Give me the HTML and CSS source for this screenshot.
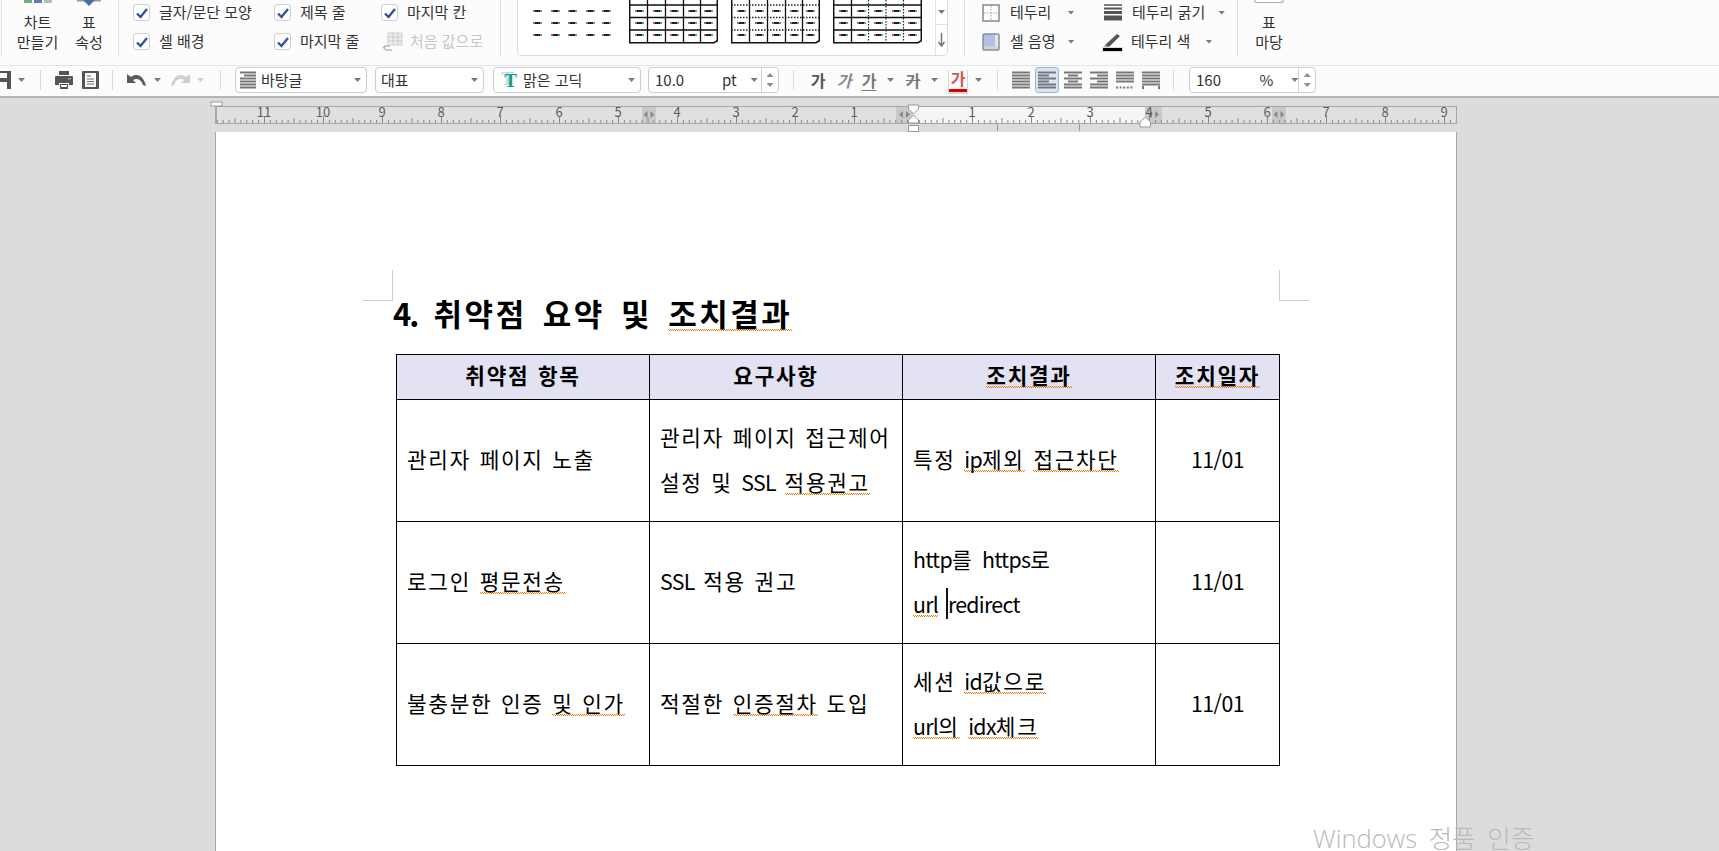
FILE: index.html
```html
<!DOCTYPE html>
<html lang="ko">
<head>
<meta charset="utf-8">
<title>표 편집</title>
<link rel="stylesheet" href="styles.css">
</head>
<body>
<svg class="defs" aria-hidden="true">
  <defs>
    <symbol id="dash" viewBox="0 0 9 2"><rect width="2" height="2" fill="#b9664e"/><rect x="2" width="5" height="2" fill="#222"/><rect x="7" width="2" height="2" fill="#5f97c8"/></symbol>
    <g id="dashrow"><use href="#dash" x="0" width="9" height="2"/><use href="#dash" x="18" width="9" height="2"/><use href="#dash" x="35" width="9" height="2"/><use href="#dash" x="53" width="9" height="2"/><use href="#dash" x="69" width="9" height="2"/></g>
    <g id="dashes"><use href="#dashrow" y="0"/><use href="#dashrow" y="12"/><use href="#dashrow" y="24"/></g>
    <symbol id="al-both" viewBox="0 0 18 18"><path d="M0 1.500h18M0 4.500h18M0 7.500h18M0 10.500h18M0 13.500h18M0 16.500h18" stroke="#777" stroke-width="2"/></symbol>
    <symbol id="al-left" viewBox="0 0 18 18"><path d="M0 1.500h18M0 4.500h11M0 7.500h18M0 10.500h11M0 13.500h18M0 16.500h18" stroke="#777" stroke-width="2"/></symbol>
    <symbol id="al-center" viewBox="0 0 18 18"><path d="M0 1.500h18M4 4.500h10M0 7.500h18M4 10.500h10M0 13.500h18M0 16.500h18" stroke="#777" stroke-width="2"/></symbol>
    <symbol id="al-right" viewBox="0 0 18 18"><path d="M0 1.500h18M7 4.500h11M0 7.500h18M7 10.500h11M0 13.500h18M0 16.500h18" stroke="#777" stroke-width="2"/></symbol>
    <symbol id="al-dist" viewBox="0 0 18 18"><path d="M0 1.500h18M0 4.500h18M0 7.500h18M0 10.500h18" stroke="#777" stroke-width="2"/><path d="M0 16.500h18" stroke="#777" stroke-width="2" stroke-dasharray="2 1.600"/></symbol>
    <symbol id="al-div" viewBox="0 0 18 18"><path d="M0 1.500h18M0 4.500h18M0 7.500h18M0 10.500h18M0 13.500h18" stroke="#777" stroke-width="2"/><path d="M1 15v3M17 15v3" stroke="#777" stroke-width="2"/></symbol>
    <symbol id="check" viewBox="0 0 12 12"><path d="M1 6.500 4.500 10 11 2" fill="none" stroke="#33549f" stroke-width="2.400"/></symbol>
    <pattern id="ticks" width="59" height="18" patternUnits="userSpaceOnUse" patternTransform="translate(698 0)">
      <path d="M.5 10v7M30 12v5M6.400 14v3M12.300 14v3M18.200 14v3M24.100 14v3M35.900 14v3M41.800 14v3M47.700 14v3M53.600 14v3" stroke="#888" stroke-width="1"/>
    </pattern>
  </defs>
</svg>

<header class="ribbon">
  <section class="group group-a">
    <div class="big big-chart">
      <svg class="big-icon" viewBox="0 0 28 6"><rect x="0" y="-4" width="8" height="7" fill="#6fae7d"/><rect x="10" y="-4" width="8" height="7" fill="#5e7cc4"/><rect x="20" y="-4" width="8" height="7" fill="#bbb"/></svg>
      <span>차트</span><span>만들기</span>
    </div>
    <div class="big big-prop">
      <svg class="big-icon" viewBox="0 0 28 6"><path d="M2 0h24v1.500h-24z" fill="#9a9a9a"/><path d="M8 0h12l-6 6z" fill="#4d6db0"/></svg>
      <span>표</span><span>속성</span>
    </div>
  </section>

  <section class="group group-b">
    <label class="opt"><span class="box"><svg class="tick"><use href="#check"/></svg></span>글자/문단 모양</label>
    <label class="opt"><span class="box"><svg class="tick"><use href="#check"/></svg></span>제목 줄</label>
    <label class="opt"><span class="box"><svg class="tick"><use href="#check"/></svg></span>마지막 칸</label>
    <label class="opt"><span class="box"><svg class="tick"><use href="#check"/></svg></span>셀 배경</label>
    <label class="opt"><span class="box"><svg class="tick"><use href="#check"/></svg></span>마지막 줄</label>
    <span class="opt opt-off">
      <svg class="reset" viewBox="0 0 21 20"><path d="M6 1h14v12H6zM6 5h14M6 9h14M11 1v12M16 1v12" fill="#eee" stroke="#ccc"/><path d="M8 14H4l-2 2 2 2h6M1 16l3-3" fill="none" stroke="#bbb" stroke-width="1.500"/></svg>
      처음 값으로
    </span>
  </section>

  <section class="group group-c">
    <div class="gallery">
      <svg class="preset-plain" viewBox="0 0 79 40"><use href="#dashes" y="10"/></svg>
      <svg class="preset" viewBox="0 0 89 44"><use href="#dashes" x="6" y="10"/><path d="M0 5h88M0 17.500h88M0 30h88M18.500 0v43M36.500 0v43M54.500 0v43M71.500 0v43" stroke="#111" stroke-width="1.300"/><path d="M.7 0v42.700H85l3.300-2V0" fill="none" stroke="#111" stroke-width="1.500"/></svg>
      <svg class="preset" viewBox="0 0 89 44"><use href="#dashes" x="6" y="10"/><path d="M0 5h88M0 17.500h88M0 30h88" stroke="#222" stroke-width="1.300" stroke-dasharray="1.500 1.500"/><path d="M18.500 0v43M36.500 0v43M54.500 0v43M71.500 0v43" stroke="#111" stroke-width="1.300"/><path d="M.7 0v42.700H85l3.300-2V0" fill="none" stroke="#111" stroke-width="1.500"/></svg>
      <svg class="preset" viewBox="0 0 89 44"><use href="#dashes" x="6" y="10"/><path d="M0 5h88M0 17.500h88M0 30h88M18.500 0v43" stroke="#111" stroke-width="1.300"/><path d="M35.500 0v43M53 0v43M70.500 0v43" stroke="#222" stroke-width="1.200" stroke-dasharray="1.500 1.500"/><path d="M.7 0v42.700H85l3.300-2V0" fill="none" stroke="#111" stroke-width="1.500"/></svg>
      <div class="gallery-scroll">
        <div class="scroll-cell"><span class="caret"></span></div>
        <div class="scroll-cell scroll-more"><svg class="more" viewBox="0 0 9 14"><path d="M4.500 0v12M1.500 9l3 4 3-4" fill="none" stroke="#777" stroke-width="1.500"/></svg></div>
      </div>
    </div>
  </section>

  <section class="group group-d">
    <div class="tool">
      <svg class="tool-icon" viewBox="0 0 18 18"><rect x="1" y="1" width="16" height="16" fill="#fff" stroke="#888" stroke-width="1.500"/><path d="M9 2v14M2 9h14" stroke="#999" stroke-dasharray="1.500 1.500"/></svg>
      <span class="tool-label">테두리</span><span class="caret caret-a"></span>
    </div>
    <div class="tool">
      <svg class="tool-icon" viewBox="0 0 18 18"><path d="M0 1h18" stroke="#555" stroke-width="1.500"/><path d="M0 4.500h18" stroke="#555" stroke-width="2"/><path d="M0 8.500h18" stroke="#555" stroke-width="3"/><path d="M0 14h18" stroke="#555" stroke-width="5"/></svg>
      <span class="tool-label">테두리 굵기</span><span class="caret caret-b"></span>
    </div>
    <div class="tool">
      <svg class="tool-icon" viewBox="0 0 18 18"><rect x="1" y="1" width="16" height="16" rx="1" fill="#b4c0e2"/><path d="M13 1h4v16h-4z" fill="#e4e4ec"/><path d="M1 13.500h16V17H1z" fill="#d2d2d2"/><rect x="1" y="1" width="16" height="16" rx="1" fill="none" stroke="#8a8f9e" stroke-width="1.500"/></svg>
      <span class="tool-label">셀 음영</span><span class="caret caret-c"></span>
    </div>
    <div class="tool">
      <svg class="tool-icon tool-pen" viewBox="0 0 21 20"><path d="M3 13 15 2l3 2L7 15z" fill="#555"/><path d="M3 13l4 2-5 1z" fill="#7b93c8"/><rect x="0" y="15" width="21" height="5" fill="#ddd"/><rect x="1" y="16" width="19" height="3" fill="#000"/></svg>
      <span class="tool-label">테두리 색</span><span class="caret caret-d"></span>
    </div>
  </section>

  <section class="group group-e">
    <div class="big big-gallery">
      <span class="big-frame"></span>
      <span>표</span><span>마당</span>
    </div>
  </section>
</header>

<nav class="toolbar">
  <svg class="ti-save" viewBox="0 0 11 18"><path d="M-9 0H11V18H-9z" fill="#555"/><rect x="-5" y="2" width="12" height="5" fill="#fff"/><rect x="-5" y="11" width="12" height="7" fill="#fff"/></svg>
  <span class="caret m-7"></span>
  <span class="sep m-15"></span>
  <svg class="ti-print m-14" viewBox="0 0 18 18"><path d="M4 0h10v4H4z" fill="#555"/><path d="M1 5h16a1 1 0 0 1 1 1v8h-4v-2H4v2H0V6a1 1 0 0 1 1-1z" fill="#555"/><path d="M5 13h8v5H5z" fill="#555"/><rect x="6" y="14" width="6" height="2" fill="#fff"/><rect x="13" y="7" width="3" height="1.500" fill="#7fa6d8"/></svg>
  <svg class="ti-page m-9" viewBox="0 0 17 18"><rect width="17" height="18" rx="1" fill="#555"/><rect x="3" y="2" width="11" height="14" fill="#fff"/><path d="M5 5h4M5 8h7M5 10.500h7M5 13h7" stroke="#666"/></svg>
  <span class="sep m-13"></span>
  <svg class="ti-undo m-14" viewBox="0 0 19 14"><path d="M0 1v9h9L6 7c4-2 8-1 10 5l3 1C17 4 11-1 4 4z" fill="#5b5b5b"/></svg>
  <span class="caret m-8"></span>
  <svg class="ti-undo ti-redo m-10" viewBox="0 0 19 14"><path d="M0 1v9h9L6 7c4-2 8-1 10 5l3 1C17 4 11-1 4 4z" fill="#cfcfcf"/></svg>
  <span class="caret caret-off m-7"></span>
  <span class="sep m-16"></span>

  <div class="combo combo-style m-14">
    <svg class="ti-style" viewBox="0 0 16 18"><path d="M0 1.500h16M4 4.500h12M0 7.500h16M0 10.500h16M0 13.500h16M0 16.500h16" stroke="#777" stroke-width="2"/></svg>
    <span class="combo-text">바탕글</span><span class="caret combo-caret"></span>
  </div>
  <div class="combo combo-rep m-8">
    <span class="combo-text">대표</span><span class="caret combo-caret"></span>
  </div>
  <div class="combo combo-font m-9">
    <span class="font-t">T</span>
    <span class="combo-text">맑은 고딕</span><span class="caret combo-caret"></span>
  </div>
  <div class="combo combo-size m-7">
    <span class="combo-text combo-value">10.0</span><span class="combo-text combo-unit">pt</span><span class="caret combo-caret"></span>
    <span class="spin"><span class="spin-up"></span><span class="spin-down"></span></span>
  </div>
  <span class="sep m-14"></span>
  <span class="ga ga-b m-15">가</span>
  <span class="ga ga-i m-8">가</span>
  <span class="ga ga-u m-7">가</span>
  <span class="caret m-9"></span>
  <span class="ga ga-s m-10">가</span>
  <span class="caret m-9"></span>
  <span class="ga ga-c m-11">가</span>
  <span class="caret m-8"></span>
  <span class="sep m-15"></span>
  <svg class="ti-al m-14"><use href="#al-both"/></svg>
  <span class="al-on m-5"><svg class="ti-al"><use href="#al-left"/></svg></span>
  <svg class="ti-al m-5"><use href="#al-center"/></svg>
  <svg class="ti-al m-8"><use href="#al-right"/></svg>
  <svg class="ti-al m-8"><use href="#al-dist"/></svg>
  <svg class="ti-al m-8"><use href="#al-div"/></svg>
  <span class="sep m-13"></span>
  <div class="combo combo-zoom m-15">
    <span class="combo-text combo-value">160</span><span class="combo-text combo-unit">%</span><span class="caret combo-caret"></span>
    <span class="spin"><span class="spin-up"></span><span class="spin-down"></span></span>
  </div>
</nav>

<main class="workspace">
  <svg class="ruler" viewBox="0 0 1262 32">
    <g transform="translate(10 6)">
      <rect x="0" y="0" width="1242" height="18" fill="#e0e0e0"/>
      <rect x="698" y="1" width="232" height="16" fill="#f5f5f5"/>
      <rect x="427" y="1" width="14" height="16" fill="#c9c9c9"/>
      <rect x="681" y="1" width="17" height="16" fill="#c9c9c9"/>
      <rect x="930" y="1" width="17" height="16" fill="#c9c9c9"/>
      <rect x="1057" y="1" width="14" height="16" fill="#c9c9c9"/>
      <path d="M432.500 5v7l-4-3.500zM435.500 5v7l4-3.500zM688 5v7l-4-3.500zM691 5v7l4-3.500zM937 5v7l-4-3.500zM940 5v7l4-3.500zM1062.500 5v7l-4-3.500zM1065.500 5v7l4-3.500z" fill="#8a8a8a"/>
      <rect x="0" y="0" width="1242" height="18" fill="url(#ticks)"/>
      <path d="M0 .5h1242M0 17.500h1242M1241.500 0v18" fill="none" stroke="#a8a8a8"/>
      <path d="M1 0v18" stroke="#a8a8a8" stroke-width="2"/>
      <g class="ruler-nums">
        <text x="49" y="11">11</text><text x="108" y="11">10</text><text x="167" y="11">9</text><text x="226" y="11">8</text><text x="285" y="11">7</text><text x="344" y="11">6</text><text x="403" y="11">5</text><text x="462" y="11">4</text><text x="521" y="11">3</text><text x="580" y="11">2</text><text x="639" y="11">1</text>
        <text x="757" y="11">1</text><text x="816" y="11">2</text><text x="875" y="11">3</text><text x="934" y="11">4</text><text x="993" y="11">5</text><text x="1052" y="11">6</text><text x="1111" y="11">7</text><text x="1170" y="11">8</text><text x="1229" y="11">9</text>
      </g>
      <rect x="-4" y="-4" width="11" height="4" fill="#fff" stroke="#999"/>
      <path d="M782.500 18v7M864.500 18v7" stroke="#999"/>
      <path d="M693.500-1h10v4l-5 5-5-5z" fill="#fff" stroke="#999"/>
      <path d="M698.500 9l5 5v3h-10v-3z" fill="#fff" stroke="#999"/>
      <rect x="693.500" y="19.500" width="10" height="6" fill="#fff" stroke="#999"/>
      <path d="M930.500 11l5 5v5h-10.500v-5z" fill="#fff" stroke="#999"/>
    </g>
  </svg>

  <article class="page">
    <span class="crop crop-left"></span>
    <span class="crop crop-right"></span>
    <h1 class="doc-title"><span class="num">4.</span> 취약점 요약 및 <span class="sq">조치결과</span></h1>
    <table class="doc-table">
      <colgroup><col class="c-wide"><col class="c-wide"><col class="c-wide"><col class="c-date"></colgroup>
      <thead>
        <tr>
          <th>취약점 항목</th>
          <th>요구사항</th>
          <th><span class="sq">조치결과</span></th>
          <th><span class="sq">조치일자</span></th>
        </tr>
      </thead>
      <tbody>
        <tr>
          <td>관리자 페이지 노출</td>
          <td>관리자 페이지 접근제어<br>설정 및 <span class="lat">SSL</span> <span class="sq">적용권고</span></td>
          <td>특정 <span class="sq"><span class="lat">ip</span>제외</span> <span class="sq">접근차단</span></td>
          <td class="date">11/01</td>
        </tr>
        <tr>
          <td>로그인 <span class="sq">평문전송</span></td>
          <td><span class="lat">SSL</span> 적용 권고</td>
          <td><span class="lat">http</span>를 <span class="lat">https</span>로<br><span class="sq"><span class="lat">url</span></span> <span class="caret-text lat">redirect</span></td>
          <td class="date">11/01</td>
        </tr>
        <tr>
          <td>불충분한 인증 <span class="sq">및 인가</span></td>
          <td>적절한 <span class="sq">인증절차</span> 도입</td>
          <td>세션 <span class="sq"><span class="lat">id</span>값으로</span><br><span class="sq"><span class="lat">url</span>의</span> <span class="sq"><span class="lat">idx</span>체크</span></td>
          <td class="date">11/01</td>
        </tr>
      </tbody>
    </table>
  </article>
</main>

<div class="watermark">Windows 정품 인증</div>
</body>
</html>
```

FILE: styles.css
```css
* { box-sizing: border-box; }
html, body { margin: 0; height: 851px; overflow: hidden; }
body {
  position: relative;
  width: 1719px;
  background: #dcdcdc;
  color: #333;
  font-family: "Noto Sans CJK KR", "Noto Sans", sans-serif;
  font-size: 15px;
  line-height: 20px;
}
svg { display: block; flex: none; }
.defs { position: absolute; width: 0; height: 0; }

/* ribbon */
.ribbon {
  display: flex;
  height: 66px;
  overflow: hidden;
  background: #fcfcfc;
  border-bottom: 1px solid #e4e4e4;
}
.group { height: 56px; border-right: 1px solid #dedede; flex: none; }
.group-a { width: 118px; margin-left: 1px; display: flex; padding-left: 12px; border-left: 1px solid #dedede; }
.big { display: flex; flex-direction: column; align-items: center; }
.big-chart { width: 47px; }
.big-prop { width: 50px; margin-left: 3px; }
.big-icon { width: 28px; height: 6px; margin-bottom: 6px; }
.big-gallery { width: 62px; }
.big-frame { width: 30px; height: 3px; margin-bottom: 9px; border: 1px solid #aaa; border-top: 0; border-radius: 0 0 3px 3px; background: #fff; }

.group-b {
  width: 382px;
  display: grid;
  grid-template-columns: 141px 107px 1fr;
  grid-template-rows: 29px 29px;
  padding-left: 14px;
  align-content: start;
}
.opt { display: flex; align-items: center; gap: 9px; white-space: nowrap; height: 25px; padding-bottom: 2px; }
.box {
  width: 17px;
  height: 17px;
  flex: none;
  margin-top: 2px;
  display: flex;
  align-items: center;
  justify-content: center;
  background: #fff;
  border: 1px solid #cfcfcf;
  border-radius: 3px;
}
.tick { width: 12px; height: 12px; }
.opt-off { color: #c6c6c6; gap: 7px; margin-left: 1px; }
.reset { width: 21px; height: 20px; margin-top: 2px; }

.group-c { width: 464px; padding-left: 16px; }
.gallery {
  width: 431px;
  height: 56px;
  display: flex;
  background: #fff;
  border: 1px solid #dcdcdc;
  border-top: 0;
  border-radius: 0 0 5px 5px;
  padding-left: 15px;
}
.preset-plain { width: 79px; height: 40px; margin-right: 17px; }
.preset { width: 89px; height: 44px; margin-right: 13px; }
.gallery-scroll { margin-left: auto; width: 15px; border-left: 1px solid #e2e2e2; display: flex; flex-direction: column; }
.scroll-cell { height: 25px; display: flex; align-items: center; justify-content: center; border-bottom: 1px solid #e2e2e2; }
.scroll-more { height: 30px; border-bottom: 0; }
.more { width: 9px; height: 14px; }

.group-d {
  width: 273px;
  display: grid;
  grid-template-columns: 122px 1fr;
  grid-template-rows: 29px 29px;
  padding-left: 17px;
}
.tool { display: flex; align-items: center; height: 25px; white-space: nowrap; padding-bottom: 2px; }
.tool-icon { width: 18px; height: 18px; margin: 2px 10px 0 0; }
.tool-pen { width: 21px; height: 20px; margin: 2px 8px 0 -2px; }
.tool .caret { margin-top: 2px; }
.caret-a { margin-left: 16px; }
.caret-b { margin-left: 13px; }
.caret-c { margin-left: 12px; }
.caret-d { margin-left: 15px; }
.group-e { border-right: 0; }

.caret {
  display: block;
  width: 7px;
  height: 4px;
  flex: none;
  background: #7a7a7a;
  clip-path: polygon(0 0, 100% 0, 50% 100%);
}
.caret-off { background: #cfcfcf; }

/* toolbar */
.toolbar {
  display: flex;
  align-items: center;
  height: 32px;
  padding-bottom: 2px;
  background: #fcfcfc;
  border-bottom: 2px solid #b4b4b4;
}
.m-5 { margin-left: 5px; }
.m-7 { margin-left: 7px; }
.m-8 { margin-left: 8px; }
.m-9 { margin-left: 9px; }
.m-10 { margin-left: 10px; }
.m-11 { margin-left: 11px; }
.m-13 { margin-left: 13px; }
.m-14 { margin-left: 14px; }
.m-15 { margin-left: 15px; }
.m-16 { margin-left: 16px; }
.sep { width: 1px; height: 20px; background: #dcdcdc; flex: none; }
.ti-save { width: 11px; height: 18px; }
.ti-print { width: 18px; height: 18px; }
.ti-page { width: 17px; height: 18px; }
.ti-undo { width: 19px; height: 14px; }
.ti-redo { transform: scaleX(-1); }
.ti-style { width: 16px; height: 18px; margin: 0 5px 0 4px; }
.ti-al { width: 18px; height: 18px; }
.al-on {
  width: 24px;
  height: 26px;
  display: flex;
  align-items: center;
  justify-content: center;
  background: #d9e4f7;
  border: 1px solid #9db5e2;
  border-radius: 3px;
  flex: none;
}

.combo {
  display: flex;
  align-items: center;
  height: 26px;
  flex: none;
  background: #fff;
  border: 1px solid #cccccc;
  border-radius: 4px;
  white-space: nowrap;
}
.combo-text { color: #333; }
.combo-caret { margin-left: auto; margin-right: 5px; }
.combo-style { width: 132px; }
.combo-rep { width: 109px; padding-left: 5px; }
.combo-font { width: 148px; padding-left: 6px; }
.combo-size { width: 131px; padding-left: 6px; }
.combo-zoom { width: 127px; padding-left: 6px; }
.combo-value { width: 67px; }
.combo-zoom .combo-value { width: 65px; }
.combo-size .combo-caret { margin-left: 14px; margin-right: 0; }
.combo-zoom .combo-caret { margin-left: 18px; margin-right: 0; }
.spin {
  margin-left: auto;
  width: 17px;
  height: 100%;
  display: flex;
  flex-direction: column;
  align-items: center;
  justify-content: center;
  gap: 6px;
  border-left: 1px solid #d4d4d4;
}
.spin-up, .spin-down { width: 7px; height: 4px; background: #8a8a8a; }
.spin-up { clip-path: polygon(50% 0, 100% 100%, 0 100%); }
.spin-down { clip-path: polygon(0 0, 100% 0, 50% 100%); }
.font-t {
  width: 17px;
  margin-right: 6px;
  color: #1a9a8a;
  font: bold 19px/1 "Liberation Serif", serif;
  text-shadow: -3px -2px 0 #b5e2d8;
  text-align: right;
}
.ga { flex: none; font-size: 16px; font-weight: 700; width: 18px; text-align: center; color: #7a7a7a; line-height: 20px; }
.ga-b { color: #555; }
.ga-i { font-style: italic; color: #8a8a8a; }
.ga-u { text-decoration: underline; text-underline-offset: 3px; }
.ga-s { text-decoration: line-through; }
.ga-c { color: #c75a5a; line-height: 16px; height: 22px; border-bottom: 3px solid #e00000; box-shadow: 0 1px 0 1px #d8d8d8; margin-top: 1px; }

/* workspace */
.workspace { padding-left: 205px; height: 753px; overflow: hidden; }
.ruler { width: 1262px; height: 32px; margin-top: 2px; }
.ruler-nums { font-size: 13px; fill: #5c5c5c; text-anchor: middle; }

.page {
  position: relative;
  width: 1242px;
  margin-left: 10px;
  height: 719px;
  background: #fff;
  border-left: 1px solid #a8a8a8;
  border-right: 1px solid #a8a8a8;
  padding: 163px 0 0 177px;
  color: #000;
  font-size: 21.330px;
}
.crop { position: absolute; top: 138px; width: 30px; height: 31px; border-bottom: 1px solid #cfcfcf; }
.crop-left { left: 147px; border-right: 1px solid #cfcfcf; }
.crop-right { left: 1063px; border-left: 1px solid #cfcfcf; }

.doc-title {
  margin: 0 0 23px;
  font-size: 31px;
  line-height: 36px;
  font-weight: 700;
  letter-spacing: 2.500px;
  word-spacing: 5px;
  white-space: nowrap;
}
.num { letter-spacing: -2px; }
.sq {
  background-image:
    repeating-linear-gradient(90deg, #f07800 0 1px, transparent 1px 2px),
    repeating-linear-gradient(90deg, transparent 0 1px, #f07800 1px 2px);
  background-size: 100% 1px, 100% 1px;
  background-repeat: no-repeat;
  background-position: 0 calc(100% - 3px), 0 calc(100% - 2px);
}
.doc-title .sq { background-position: 0 calc(100% - 5px), 0 calc(100% - 4px); }
.doc-table {
  margin-left: 3px;
  width: 883px;
  border-collapse: collapse;
  table-layout: fixed;
  letter-spacing: 1.700px;
  word-spacing: 1px;
}
.c-wide { width: 253px; }
.c-date { width: 124px; }
.doc-table th, .doc-table td { border: 1px solid #000; padding: 0 0 4px 10px; }
.doc-table th { height: 45px; background: #e2e2f2; text-align: center; padding-left: 0; font-weight: 700; }
.doc-table td { height: 122px; line-height: 45px; }
.doc-table td.date { text-align: center; padding-left: 0; letter-spacing: -.5px; }
.lat { letter-spacing: -.7px; }
.caret-text { border-left: 2px solid #111; margin-left: -1px; line-height: 1; }

.watermark {
  position: absolute;
  left: 1313px;
  top: 820px;
  color: #b9b9b9;
  font: 300 25.500px/36px "Open Sans", "Noto Sans CJK KR", sans-serif;
  word-spacing: 5px;
  white-space: nowrap;
}
```
